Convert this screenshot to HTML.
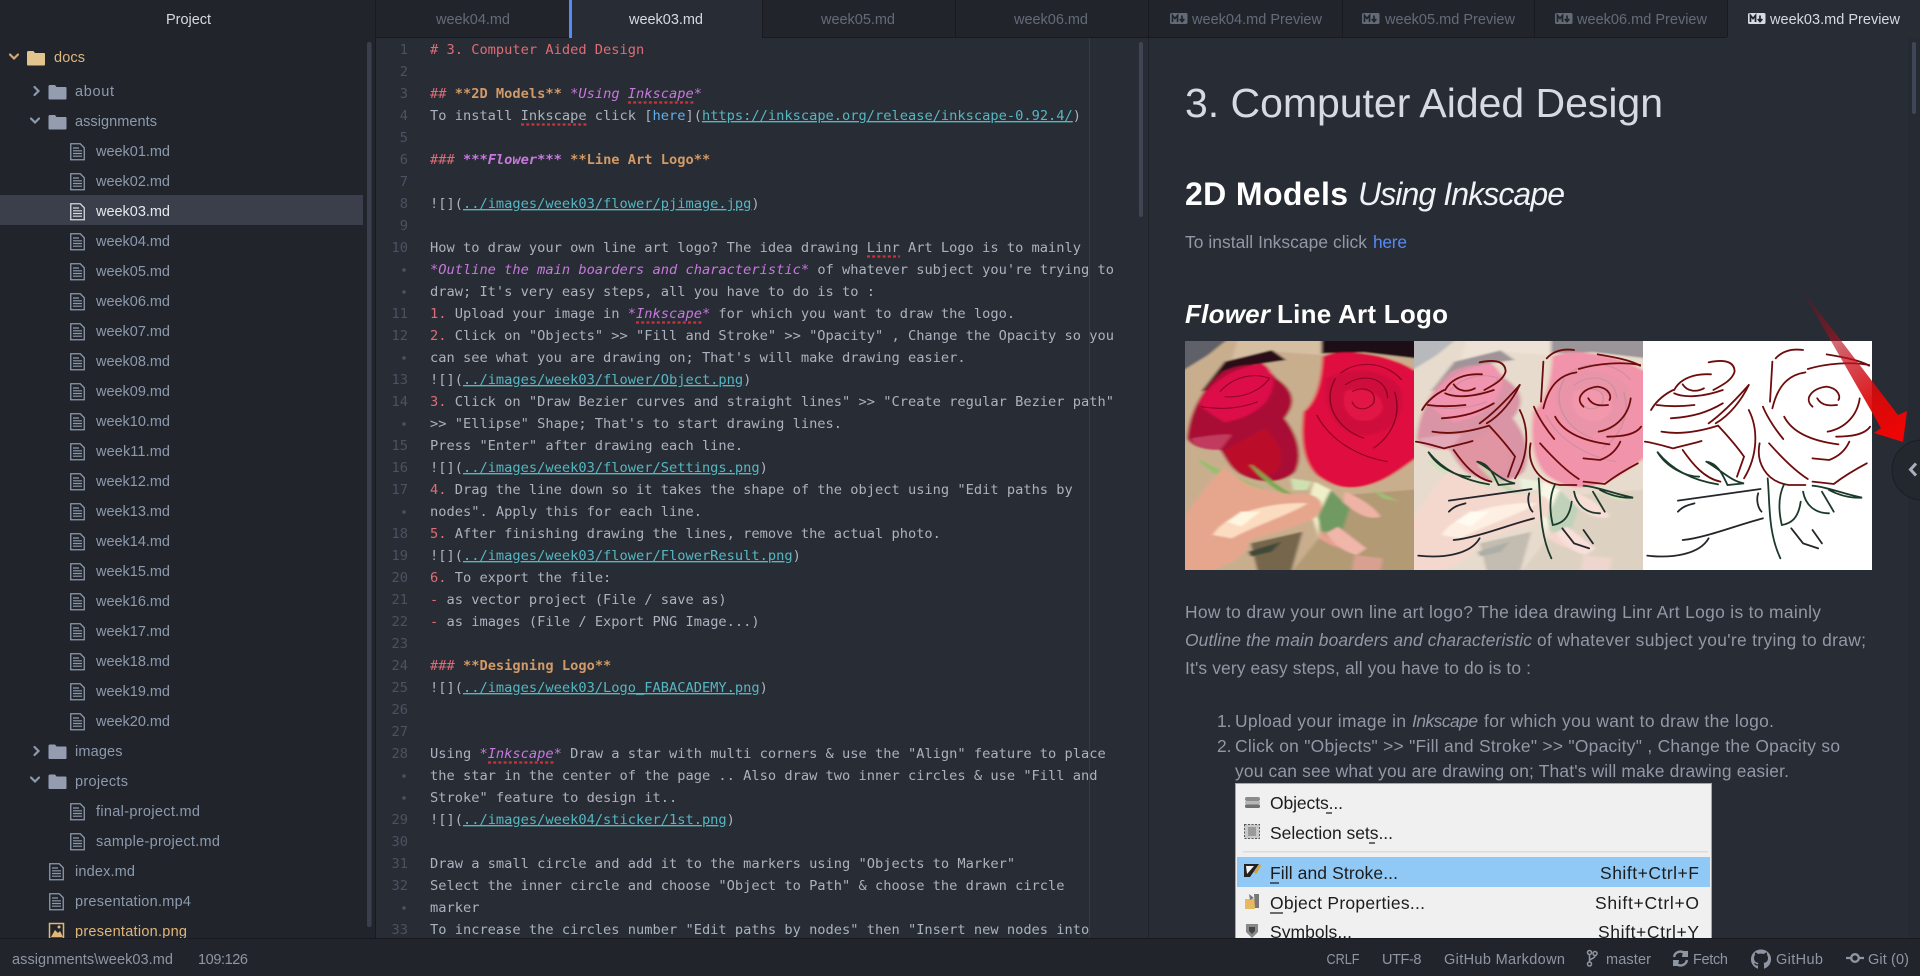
<!DOCTYPE html>
<html><head><meta charset="utf-8"><title>week03.md</title>
<style>
html,body{margin:0;padding:0;background:#282c34;width:1920px;height:976px;overflow:hidden}
svg{display:block}
text{font-family:"Liberation Sans",sans-serif;white-space:pre}
.c text,.c{font-family:"DejaVu Sans Mono",monospace;font-size:13.7px;fill:#abb2bf}
.g{font-family:"DejaVu Sans Mono",monospace;font-size:13.7px;fill:#4b5263;text-anchor:end}
.r{fill:#e06c75}.o{fill:#d19a66;font-weight:bold}.p{fill:#c678dd;font-style:italic}.b{fill:#c678dd;font-weight:bold;font-style:italic}
.l{fill:#56b6c2;text-decoration:underline}.h{fill:#61afef}
.s{font-size:14.5px;fill:#8d9aae}
.t{font-size:14.5px;fill:#646b78}.ta{font-size:14.5px;fill:#d7dae0}
.st{font-size:14.5px;fill:#8f96a3}
.pv{font-size:17.4px;fill:#9298a6}
.m{font-size:17.5px;fill:#1c1c1c}
.sq{stroke:#c8343c;stroke-width:2.2;stroke-dasharray:3 2.2;fill:none}
.rl path{fill:none;vector-effect:non-scaling-stroke;stroke-linecap:round;stroke-width:1.8}
</style></head><body>
<svg width="1920" height="976" viewBox="0 0 1920 976" xmlns="http://www.w3.org/2000/svg">
<defs>
<filter id="bl" x="-5%" y="-5%" width="110%" height="110%"><feGaussianBlur stdDeviation="3.5 2.5"/></filter>
<g id="f"><path d="M.75.75h9.5l4 4v12h-13.5z" fill="none" stroke="currentColor" stroke-width="1.3"/><path d="M3 5h6M3 7.8h9M3 10.5h9M3 13.2h9" stroke="currentColor" stroke-width="1.2"/></g>
<path id="fo" d="M0 2.5Q0 1 1.5 1H6.5L8 3H17Q18 3 18 4V14.5Q18 15.5 17 15.5H1Q0 15.5 0 14.5Z"/>
<g id="md"><rect width="17.5" height="11" rx="1.5" fill="currentColor"/><path d="M2.5 9V2.500L5 5.500 7.500 2.500V9M12 2.500V8M9.800 6L12 8.600 14.300 6" fill="none" stroke="#21252b" stroke-width="1.700"/></g>
<g id="photo">
<g filter="url(#bl)">
<rect x="-20" y="-20" width="550" height="760" fill="#c9ae8e"/>
<path d="M-20 -20H130L60 60 -20 130Z" fill="#5f6068"/>
<path d="M130 -20H300V60L200 50 110 75Z" fill="#d6bea0"/>
<path d="M45 170L95 80 195 45 225 75 130 95 75 155Z" fill="#2a0f18"/>
<path d="M300 -20H530V75L390 52 300 55Z" fill="#1c0716"/>
<path d="M350 480L530 460V740H220L300 600Z" fill="#b29a74"/>
<path d="M150 625L260 590 230 740 170 740Z" fill="#76664c"/>
<path d="M370 660L430 670 420 740 360 740Z" fill="#d8a090"/>
<path d="M15 310C20 240 40 170 90 110C130 85 175 75 205 130C240 165 250 200 222 250C250 300 262 360 245 410C220 445 170 450 125 415C100 390 95 360 85 345C50 345 25 335 15 310Z" fill="#a90f34"/>
<path d="M40 205C55 160 100 100 175 85C205 110 205 160 180 205C150 245 120 255 95 262C70 240 50 225 40 205Z" fill="#dc1148"/>
<path d="M95 345C130 320 160 295 180 280C210 320 225 360 205 410C170 440 130 420 110 390Z" fill="#bb0a2c"/>
<path d="M25 310C50 305 90 295 110 300L85 345C50 345 25 335 25 310Z" fill="#c13a5e"/>
<path d="M262 230C290 200 300 130 302 65C340 38 440 55 496 105L520 110V350C470 400 440 435 400 450C350 470 320 450 290 420C262 380 255 320 262 230Z" fill="#e0103f"/>
<path d="M310 130C360 90 450 100 470 170C480 250 440 310 370 300C320 280 300 190 310 130Z" fill="#cf0e3d"/>
<path d="M350 170C380 150 430 170 430 220C420 260 380 270 360 240C345 220 345 190 350 170Z" fill="#e21445"/>
<path d="M285 440L320 465C300 510 290 560 295 610L280 540C275 500 275 470 285 440Z" fill="#efefc8"/>
<path d="M320 465L360 520 345 585 300 590 292 545Z" fill="#6f9a62"/>
<path d="M42 375C70 420 130 455 175 462C140 440 80 410 42 375Z" fill="#98bd6e" stroke="#98bd6e" stroke-width="6"/>
<path d="M150 390C180 420 205 455 240 480 205 475 175 430 150 390Z" fill="#7da84f" stroke="#7da84f" stroke-width="3"/>
<path d="M235 430L280 440 270 465 240 465Z" fill="#cfe0b0"/>
<path d="M405 460L465 500 430 490Z" fill="#9cc070"/>
<path d="M-20 620C10 540 50 460 95 395C125 445 180 480 275 478C305 490 310 520 285 550C240 580 180 600 150 615C140 665 90 720 -20 720Z" fill="#e6a68e"/>
<path d="M70 600C100 530 200 500 270 505 240 535 170 565 110 610Z" fill="#fbdcc0"/>
<path d="M100 560L130 530 170 530 130 575Z" fill="#fff6e0"/>
<path d="M350 470C385 490 415 520 425 545 395 560 360 520 345 500Z" fill="#eeb3a4"/>
<path d="M335 575L395 640 375 660C345 650 320 620 310 595Z" fill="#f0b6aa"/>
<path d="M300 590L340 640 320 630 295 610Z" fill="#e8a090"/>
<path d="M145 650L215 620 195 650 150 665Z" fill="#3f4a38"/>
</g>
<g fill="none" stroke="#6a0018" stroke-width="3" opacity=".7">
<path d="M85 170C110 130 150 110 190 130M95 185C130 190 170 170 190 130M45 215C90 225 130 220 165 200M340 115C380 70 440 85 470 135M350 150C390 110 440 130 440 190M365 170C390 150 420 170 410 205C395 230 370 225 365 200M290 240C320 320 380 365 440 380M330 130C300 200 330 280 390 310M455 170C470 240 450 300 410 340"/>
</g>
</g>
<g id="lines" class="rl" transform="translate(-970 0)">
<g stroke="#6e0c0c">
<path d="M1047 165C1060 130 1090 115 1125 118"/>
<path d="M1120 82C1160 70 1175 85 1175 110C1170 135 1150 150 1130 165"/>
<path d="M1065 148C1075 170 1095 172 1110 160"/>
<path d="M1047 175C1070 190 1110 185 1150 165"/>
<path d="M998 225C1010 195 1030 175 1045 165"/>
<path d="M1010 210C1035 215 1060 215 1090 210"/>
<path d="M1040 250C1090 245 1120 230 1150 205"/>
<path d="M1120 265C1150 235 1180 190 1205 150"/>
<path d="M1135 265C1165 240 1190 195 1205 150"/>
<path d="M1020 290C1060 300 1100 290 1140 272"/>
<path d="M985 320C1010 325 1030 335 1045 340C1070 330 1090 325 1105 318"/>
<path d="M1140 272C1165 310 1185 345 1195 365L1180 425"/>
<path d="M1205 225C1225 280 1225 360 1195 430"/>
<path d="M1065 345C1085 385 1110 430 1145 440"/>
<path d="M1262 70C1275 50 1295 40 1320 45"/>
<path d="M1255 80L1250 200"/>
<path d="M1370 58C1400 65 1440 75 1460 92"/>
<path d="M1330 102C1370 85 1420 80 1460 90"/>
<path d="M1255 220C1265 160 1285 120 1325 112"/>
<path d="M1340 215C1320 190 1340 160 1370 155C1395 160 1400 185 1395 195"/>
<path d="M1350 190C1360 215 1380 212 1392 210"/>
<path d="M1280 245C1300 300 1350 320 1395 328"/>
<path d="M1235 215C1245 250 1265 290 1278 312"/>
<path d="M1440 190C1435 240 1410 280 1372 290"/>
<path d="M1390 305C1420 305 1450 300 1462 275"/>
<path d="M1418 320C1410 345 1395 365 1375 375L1340 370"/>
<path d="M1228 325C1220 380 1240 440 1290 450L1325 450"/>
<path d="M1248 325C1270 360 1300 405 1330 432"/>
<path d="M1340 440L1385 447C1410 420 1435 400 1455 385"/>
</g>
<g stroke="#1c3a2a">
<path d="M1012 352C1040 400 1080 435 1140 448"/>
<path d="M1012 352C1030 395 1070 425 1100 425"/>
<path d="M1115 380C1140 385 1150 420 1160 450L1195 445C1170 440 1150 410 1115 380"/>
<path d="M1340 452C1370 455 1400 475 1445 488C1420 490 1395 480 1375 465"/>
<path d="M1245 430C1250 500 1245 590 1272 670"/>
<path d="M1280 447C1265 490 1270 540 1275 570C1295 565 1310 550 1315 500"/>
<path d="M1320 470C1325 510 1345 535 1375 535"/>
<path d="M1360 470L1385 530"/>
</g>
<g stroke="#23262a">
<path d="M1295 580L1320 625 1352 640"/>
<path d="M1055 497L1230 462"/>
<path d="M1055 530C1065 515 1075 510 1090 505"/>
<path d="M1225 475C1220 495 1225 520 1232 530"/>
<path d="M1065 615C1110 610 1180 570 1235 550"/>
<path d="M990 662C1040 670 1100 660 1120 610"/>
<path d="M1340 585L1360 625"/>
</g>
</g>
<linearGradient id="ag" gradientUnits="userSpaceOnUse" x1="1800" y1="287" x2="1900" y2="430">
<stop offset="0" stop-color="#7a0a18" stop-opacity=".15"/><stop offset=".45" stop-color="#c01020" stop-opacity=".7"/><stop offset=".8" stop-color="#e00808" stop-opacity=".95"/><stop offset="1" stop-color="#ee0505"/>
</linearGradient>
</defs>

<!-- backgrounds -->
<rect width="1920" height="976" fill="#282c34"/>
<rect width="375" height="976" fill="#21252b"/>
<rect x="375" width="1" height="976" fill="#181a1f"/>
<rect y="195" width="363" height="30" fill="#3a3f4b"/>
<rect x="367" y="42" width="4.500" height="885" rx="2" fill="#3a3f4b"/>

<!-- tabs -->
<rect x="376" width="1544" height="37" fill="#21252b"/>
<rect x="376" y="37" width="1544" height="1" fill="#181a1f"/>
<rect x="569" width="193" height="38" fill="#282c34"/>
<rect x="569" width="3" height="38" fill="#568af2"/>
<rect x="1727" width="193" height="38" fill="#282c34"/>
<g fill="#181a1f"><rect x="762" width="1" height="37"/><rect x="955" width="1" height="37"/><rect x="1148" width="1" height="37"/><rect x="1342" width="1" height="37"/><rect x="1534" width="1" height="37"/><rect x="1727" width="1" height="37"/></g>
<text class="ta" x="166" y="24" textLength="45">Project</text>
<text class="t" x="436" y="24" textLength="74">week04.md</text>
<text class="ta" x="629" y="24" textLength="74">week03.md</text>
<text class="t" x="821" y="24" textLength="74">week05.md</text>
<text class="t" x="1014" y="24" textLength="74">week06.md</text>
<use href="#md" x="1170" y="13" style="color:#646b78"/><text class="t" x="1192" y="24" textLength="130">week04.md Preview</text>
<use href="#md" x="1362" y="13" style="color:#646b78"/><text class="t" x="1385" y="24" textLength="130">week05.md Preview</text>
<use href="#md" x="1555" y="13" style="color:#646b78"/><text class="t" x="1577" y="24" textLength="130">week06.md Preview</text>
<use href="#md" x="1748" y="13" style="color:#d7dae0"/><text class="ta" x="1770" y="24" textLength="130">week03.md Preview</text>

<!-- tree -->
<g fill="none" stroke-width="2.200" stroke-linecap="round">
<path d="M10 54.500L14 58.500 18 54.500" stroke="#d0ab72"/>
<path d="M34.500 87L38.500 91 34.500 95" stroke="#8d9aae"/>
<path d="M31 118.500L35 122.500 39 118.500" stroke="#8d9aae"/>
<path d="M34.500 747L38.500 751 34.500 755" stroke="#8d9aae"/>
<path d="M31 777.500L35 781.500 39 777.500" stroke="#8d9aae"/>
</g>
<use href="#fo" x="27" y="50" fill="#e3c48f"/>
<use href="#fo" x="48.500" y="84" fill="#949db0"/>
<use href="#fo" x="48.500" y="114" fill="#949db0"/>
<use href="#fo" x="48.500" y="743.500" fill="#949db0"/>
<use href="#fo" x="48.500" y="773.500" fill="#949db0"/>
<g style="color:#8d9aae">
<use href="#f" x="70" y="143"/><use href="#f" x="70" y="173"/><use href="#f" x="70" y="203" style="color:#d7dae0"/><use href="#f" x="70" y="233"/><use href="#f" x="70" y="263"/><use href="#f" x="70" y="293"/><use href="#f" x="70" y="323"/><use href="#f" x="70" y="353"/><use href="#f" x="70" y="383"/><use href="#f" x="70" y="413"/><use href="#f" x="70" y="443"/><use href="#f" x="70" y="473"/><use href="#f" x="70" y="503"/><use href="#f" x="70" y="533"/><use href="#f" x="70" y="563"/><use href="#f" x="70" y="593"/><use href="#f" x="70" y="623"/><use href="#f" x="70" y="653"/><use href="#f" x="70" y="683"/><use href="#f" x="70" y="713"/>
<use href="#f" x="70" y="803"/><use href="#f" x="70" y="833"/><use href="#f" x="49" y="863"/><use href="#f" x="49" y="893"/>
</g>
<rect x="49.500" y="923.500" width="14" height="15" fill="none" stroke="#e2b578" stroke-width="1.500"/><path d="M51 937L55 930 58 933 60 931 63 937Z" fill="#e2b578"/><circle cx="59" cy="927" r="1.500" fill="#e2b578"/>
<text class="s" x="54" y="62" textLength="31" style="fill:#dcb67c">docs</text>
<text class="s" x="75" y="96" textLength="39">about</text>
<text class="s" x="75" y="126" textLength="82">assignments</text>
<text class="s" x="96" y="156" textLength="74">week01.md</text>
<text class="s" x="96" y="186" textLength="74">week02.md</text>
<text class="s" x="96" y="216" textLength="74" style="fill:#e6e9ee">week03.md</text>
<text class="s" x="96" y="246" textLength="74">week04.md</text>
<text class="s" x="96" y="276" textLength="74">week05.md</text>
<text class="s" x="96" y="306" textLength="74">week06.md</text>
<text class="s" x="96" y="336" textLength="74">week07.md</text>
<text class="s" x="96" y="366" textLength="74">week08.md</text>
<text class="s" x="96" y="396" textLength="74">week09.md</text>
<text class="s" x="96" y="426" textLength="74">week10.md</text>
<text class="s" x="96" y="456" textLength="74">week11.md</text>
<text class="s" x="96" y="486" textLength="74">week12.md</text>
<text class="s" x="96" y="516" textLength="74">week13.md</text>
<text class="s" x="96" y="546" textLength="74">week14.md</text>
<text class="s" x="96" y="576" textLength="74">week15.md</text>
<text class="s" x="96" y="606" textLength="74">week16.md</text>
<text class="s" x="96" y="636" textLength="74">week17.md</text>
<text class="s" x="96" y="666" textLength="74">week18.md</text>
<text class="s" x="96" y="696" textLength="74">week19.md</text>
<text class="s" x="96" y="726" textLength="74">week20.md</text>
<text class="s" x="75" y="756" textLength="47.500">images</text>
<text class="s" x="75" y="786" textLength="53">projects</text>
<text class="s" x="96" y="816" textLength="104">final-project.md</text>
<text class="s" x="96" y="846" textLength="124">sample-project.md</text>
<text class="s" x="75" y="876" textLength="60">index.md</text>
<text class="s" x="75" y="906" textLength="116">presentation.mp4</text>
<text class="s" x="75" y="936" textLength="112" style="fill:#e2b578">presentation.png</text>

<!-- editor chrome -->
<rect x="1089" y="38" width="1" height="901" fill="#363b44"/>
<rect x="1139" y="42" width="4" height="175" rx="2" fill="#3f4552"/>
<rect x="1148" y="38" width="1" height="901" fill="#1f2229"/>

<!-- gutter -->
<g class="g">
<text class="g" x="408" y="54">1</text><text class="g" x="408" y="76">2</text><text class="g" x="408" y="98">3</text><text class="g" x="408" y="120">4</text><text class="g" x="408" y="142">5</text><text class="g" x="408" y="164">6</text><text class="g" x="408" y="186">7</text><text class="g" x="408" y="208">8</text><text class="g" x="408" y="230">9</text><text class="g" x="408" y="252">10</text>
<text class="g" x="408" y="318">11</text><text class="g" x="408" y="340">12</text><text class="g" x="408" y="384">13</text><text class="g" x="408" y="406">14</text><text class="g" x="408" y="450">15</text><text class="g" x="408" y="472">16</text><text class="g" x="408" y="494">17</text><text class="g" x="408" y="538">18</text><text class="g" x="408" y="560">19</text><text class="g" x="408" y="582">20</text><text class="g" x="408" y="604">21</text><text class="g" x="408" y="626">22</text><text class="g" x="408" y="648">23</text><text class="g" x="408" y="670">24</text><text class="g" x="408" y="692">25</text><text class="g" x="408" y="714">26</text><text class="g" x="408" y="736">27</text><text class="g" x="408" y="758">28</text><text class="g" x="408" y="824">29</text><text class="g" x="408" y="846">30</text><text class="g" x="408" y="868">31</text><text class="g" x="408" y="890">32</text><text class="g" x="408" y="934">33</text>
</g>
<g fill="#4b5263"><circle cx="404" cy="270" r="1.800"/><circle cx="404" cy="292" r="1.800"/><circle cx="404" cy="358" r="1.800"/><circle cx="404" cy="424" r="1.800"/><circle cx="404" cy="512" r="1.800"/><circle cx="404" cy="776" r="1.800"/><circle cx="404" cy="798" r="1.800"/><circle cx="404" cy="908" r="1.800"/></g>

<!-- code -->
<g class="c">
<text x="430" y="54"><tspan class="r"># 3. Computer Aided Design</tspan></text>
<text x="430" y="98"><tspan class="r">## </tspan><tspan class="o">**2D Models**</tspan> <tspan class="p">*Using Inkscape*</tspan></text>
<text x="430" y="120">To install Inkscape click [<tspan class="h">here</tspan>](<tspan class="l">https://inkscape.org/release/inkscape-0.92.4/</tspan>)</text>
<text x="430" y="164"><tspan class="r">### </tspan><tspan class="b">***Flower***</tspan> <tspan class="o">**Line Art Logo**</tspan></text>
<text x="430" y="208">![](<tspan class="l">../images/week03/flower/pjimage.jpg</tspan>)</text>
<text x="430" y="252">How to draw your own line art logo? The idea drawing Linr Art Logo is to mainly</text>
<text x="430" y="274"><tspan class="p">*Outline the main boarders and characteristic*</tspan> of whatever subject you're trying to</text>
<text x="430" y="296">draw; It's very easy steps, all you have to do is to :</text>
<text x="430" y="318"><tspan class="r">1.</tspan> Upload your image in <tspan class="p">*Inkscape*</tspan> for which you want to draw the logo.</text>
<text x="430" y="340"><tspan class="r">2.</tspan> Click on "Objects" &gt;&gt; "Fill and Stroke" &gt;&gt; "Opacity" , Change the Opacity so you</text>
<text x="430" y="362">can see what you are drawing on; That's will make drawing easier.</text>
<text x="430" y="384">![](<tspan class="l">../images/week03/flower/Object.png</tspan>)</text>
<text x="430" y="406"><tspan class="r">3.</tspan> Click on "Draw Bezier curves and straight lines" &gt;&gt; "Create regular Bezier path"</text>
<text x="430" y="428">&gt;&gt; "Ellipse" Shape; That's to start drawing lines.</text>
<text x="430" y="450">Press "Enter" after drawing each line.</text>
<text x="430" y="472">![](<tspan class="l">../images/week03/flower/Settings.png</tspan>)</text>
<text x="430" y="494"><tspan class="r">4.</tspan> Drag the line down so it takes the shape of the object using "Edit paths by</text>
<text x="430" y="516">nodes". Apply this for each line.</text>
<text x="430" y="538"><tspan class="r">5.</tspan> After finishing drawing the lines, remove the actual photo.</text>
<text x="430" y="560">![](<tspan class="l">../images/week03/flower/FlowerResult.png</tspan>)</text>
<text x="430" y="582"><tspan class="r">6.</tspan> To export the file:</text>
<text x="430" y="604"><tspan class="r">-</tspan> as vector project (File / save as)</text>
<text x="430" y="626"><tspan class="r">-</tspan> as images (File / Export PNG Image...)</text>
<text x="430" y="670"><tspan class="r">### </tspan><tspan class="o">**Designing Logo**</tspan></text>
<text x="430" y="692">![](<tspan class="l">../images/week03/Logo_FABACADEMY.png</tspan>)</text>
<text x="430" y="758">Using <tspan class="p">*Inkscape*</tspan> Draw a star with multi corners &amp; use the "Align" feature to place</text>
<text x="430" y="780">the star in the center of the page .. Also draw two inner circles &amp; use "Fill and</text>
<text x="430" y="802">Stroke" feature to design it..</text>
<text x="430" y="824">![](<tspan class="l">../images/week04/sticker/1st.png</tspan>)</text>
<text x="430" y="868">Draw a small circle and add it to the markers using "Objects to Marker"</text>
<text x="430" y="890">Select the inner circle and choose "Object to Path" &amp; choose the drawn circle</text>
<text x="430" y="912">marker</text>
<text x="430" y="934">To increase the circles number "Edit paths by nodes" then "Insert new nodes into</text>
</g>
<path class="sq" d="M628 102.500H694M521 124.500H587M867 256.500H900M636 322.500H702M488 762.500H554"/>

<!-- preview -->
<rect x="1908" y="38" width="12" height="901" fill="#262a32"/>
<rect x="1912" y="42" width="4" height="72" rx="2" fill="#3f4757"/>
<text x="1185" y="117" style="font-size:41px;fill:#d7dae0" textLength="478">3. Computer Aided Design</text>
<text x="1185" y="205" style="font-size:32px;font-weight:bold;fill:#fff" textLength="163">2D Models</text>
<text x="1358" y="205" style="font-size:32px;font-style:italic;fill:#f0f2f5" textLength="207">Using Inkscape</text>
<text class="pv" x="1185" y="248" textLength="182">To install Inkscape click</text>
<text class="pv" x="1373" y="248" style="fill:#568af2" textLength="34">here</text>
<text x="1185" y="323" style="font-size:26px;font-weight:bold;font-style:italic;fill:#fff" textLength="85">Flower</text>
<text x="1277" y="323" style="font-size:26px;font-weight:bold;fill:#fff" textLength="171">Line Art Logo</text>

<!-- roses -->
<rect x="1185" y="341" width="687" height="229" fill="#fff"/>
<svg x="1185" y="341" width="229" height="229" viewBox="11 18 485 687" preserveAspectRatio="none"><use href="#photo"/></svg>
<svg x="1414" y="341" width="229" height="229" viewBox="11 18 485 687" preserveAspectRatio="none"><use href="#photo"/><rect x="0" y="0" width="510" height="720" fill="#fff" opacity=".56"/><use href="#lines"/></svg>
<svg x="1643" y="341" width="229" height="229" viewBox="11 18 485 687" preserveAspectRatio="none"><use href="#lines"/></svg>

<text class="pv" x="1185" y="618" textLength="636">How to draw your own line art logo? The idea drawing Linr Art Logo is to mainly</text>
<text class="pv" x="1185" y="646" style="font-style:italic" textLength="347">Outline the main boarders and characteristic</text>
<text class="pv" x="1537" y="646" textLength="329">of whatever subject you're trying to draw;</text>
<text class="pv" x="1185" y="674" textLength="346">It's very easy steps, all you have to do is to :</text>
<text class="pv" x="1217" y="727">1.</text>
<text class="pv" x="1235" y="727" textLength="171">Upload your image in</text>
<text class="pv" x="1412" y="727" style="font-style:italic" textLength="66">Inkscape</text>
<text class="pv" x="1484" y="727" textLength="290">for which you want to draw the logo.</text>
<text class="pv" x="1217" y="752">2.</text>
<text class="pv" x="1235" y="752" textLength="605">Click on "Objects" &gt;&gt; "Fill and Stroke" &gt;&gt; "Opacity" , Change the Opacity so</text>
<text class="pv" x="1235" y="777" textLength="554">you can see what you are drawing on; That's will make drawing easier.</text>

<!-- menu image -->
<rect x="1235.500" y="783.500" width="476" height="170" fill="#f0f0f0" stroke="#a4a6a8"/>
<rect x="1243" y="851" width="465" height="1.500" fill="#dcdcdc"/>
<rect x="1237" y="857" width="473" height="30" fill="#90c8f6"/>
<text class="m" x="1270" y="809" textLength="73">Objects...</text>
<text class="m" x="1270" y="839" textLength="123">Selection sets...</text>
<text class="m" x="1270" y="879" textLength="128">Fill and Stroke...</text>
<text class="m" x="1600" y="879" textLength="99">Shift+Ctrl+F</text>
<text class="m" x="1270" y="909" textLength="155">Object Properties...</text>
<text class="m" x="1595" y="909" textLength="104">Shift+Ctrl+O</text>
<text class="m" x="1270" y="938" textLength="82">Symbols...</text>
<text class="m" x="1598" y="938" textLength="101">Shift+Ctrl+Y</text>
<path d="M1326 813H1332M1369 843H1375M1270 883H1279M1270 913H1283" stroke="#1c1c1c" stroke-width="1.200"/>
<!-- menu icons -->
<rect x="1245" y="797" width="15" height="4" rx="2" fill="#8a8a8a"/><rect x="1245" y="801" width="15" height="3.500" rx="1.500" fill="#b8b8b8"/><rect x="1245" y="804.500" width="15" height="3.500" rx="1.500" fill="#707070"/>
<rect x="1244.500" y="824.500" width="15" height="14" fill="#c8c8c8" stroke="#555" stroke-dasharray="2 1.500"/><rect x="1248" y="827" width="8" height="9" fill="#9a9a9a"/>
<path d="M1244 864H1259L1250 877H1244Z" fill="#222"/><path d="M1246 866H1254L1247 874Z" fill="#f4f4f4"/><path d="M1254 872L1260 864 1261 866 1256 874Z" fill="#e0a020"/>
<rect x="1245" y="899" width="10" height="10" fill="#e8b860"/><path d="M1254 894H1259V908H1255ZM1249 894L1254 898 1250 900Z" fill="#777"/>
<path d="M1246 924H1258V932L1252 938 1246 932Z" fill="#888"/><path d="M1249 927H1255V931L1252 934 1249 931Z" fill="#444"/>

<!-- red arrow & handle -->
<path d="M1800 287L1898 415 1907 411 1903 442 1874 433 1881 428Z" fill="url(#ag)"/>
<circle cx="1922" cy="470" r="30" fill="#23272e" stroke="#1b1e23"/>
<path d="M1916 463.500L1910.500 469.500 1916 475.500" fill="none" stroke="#a9b0bd" stroke-width="3"/>

<!-- status bar -->
<rect y="938" width="1920" height="38" fill="#21252b"/>
<rect y="938" width="1920" height="1" fill="#181a1f"/>
<text class="st" x="12" y="964" textLength="161">assignments\week03.md</text>
<text class="st" x="198" y="964" textLength="50">109:126</text>
<text class="st" x="1326.500" y="964" textLength="33" lengthAdjust="spacingAndGlyphs">CRLF</text>
<text class="st" x="1382" y="964" textLength="39.500">UTF-8</text>
<text class="st" x="1444" y="964" textLength="121">GitHub Markdown</text>
<g transform="translate(0 -4)">
<g fill="none" stroke="#8f96a3" stroke-width="1.500"><circle cx="1589.500" cy="956.500" r="2"/><circle cx="1589.500" cy="968" r="2"/><circle cx="1595" cy="957.500" r="2"/><path d="M1589.500 958.500V966M1595 959.500C1595 963 1590 962 1589.500 965"/></g>
<g fill="none" stroke="#8f96a3" stroke-width="2.300"><path d="M1674 961A6.500 6.500 0 0 1 1685 957.500"/><path d="M1687 964A6.500 6.500 0 0 1 1676 967.500"/></g><path d="M1683 955H1688V961H1682ZM1678 970H1673V964H1679Z" fill="#8f96a3"/>
<path d="M1761 953.500A9.800 9.800 0 0 0 1758 972.700V969.500C1755 970 1754.500 968 1754 967 1755.500 967 1756 968 1757 968.500 1758 968.500 1758 967.500 1758.500 967 1755.500 966.500 1754 965 1754 962 1754 960.500 1754.500 959.500 1755 959 1754.800 958.500 1754.800 957 1755.300 956.500 1756.500 956.500 1757.500 957.500 1758 958 1760 957.500 1762 957.500 1764 958 1764.500 957.500 1765.500 956.500 1766.700 956.500 1767.200 957 1767.200 958.500 1767 959 1767.500 959.500 1768 960.500 1768 962 1768 965 1766.500 966.500 1763.500 967 1764 967.500 1764 968 1764 969.500V972.700A9.800 9.800 0 0 0 1761 953.500Z" fill="#8f96a3"/>
<circle cx="1855" cy="962" r="3.800" fill="none" stroke="#8f96a3" stroke-width="2.300"/><path d="M1846 962H1851M1859 962H1864" stroke="#8f96a3" stroke-width="2.300"/>
</g>
<text class="st" x="1606" y="964" textLength="45">master</text>
<text class="st" x="1693" y="964" textLength="35">Fetch</text>
<text class="st" x="1776" y="964" textLength="47">GitHub</text>
<text class="st" x="1868" y="964" textLength="41">Git (0)</text>
</svg>
</body></html>
